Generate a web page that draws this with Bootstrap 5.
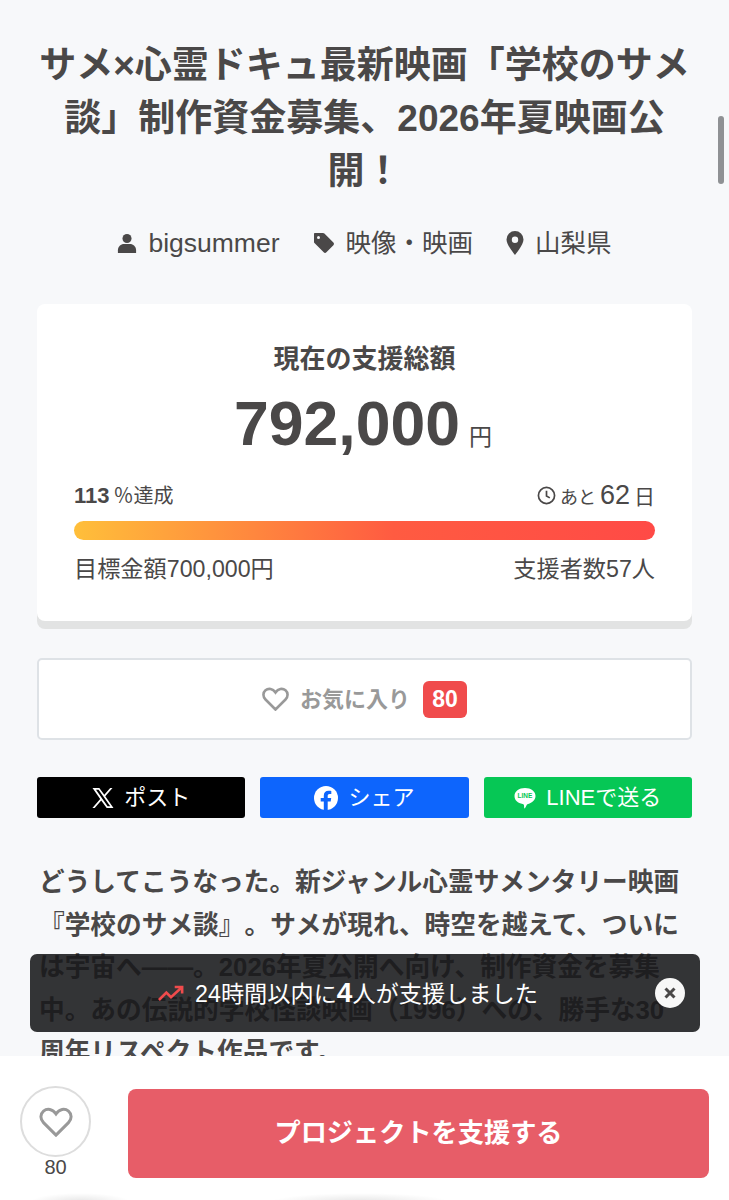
<!DOCTYPE html>
<html lang="ja">
<head>
  <meta charset="UTF-8">
  <meta name="viewport" content="width=device-width, initial-scale=1.0">
  <title>学校のサメ談</title>
  <link href="https://cdn.jsdelivr.net/npm/bootstrap@5.3.0/dist/css/bootstrap.min.css" rel="stylesheet">
  <style>
    html, body { height: 1200px; overflow: hidden; }
    body {
      background-color: #f7f8fa;
      color: #4a4848;
      font-family: "Liberation Sans", "Noto Sans CJK JP", sans-serif;
      text-spacing-trim: space-all;
    }
    .page-wrap { padding: 39px 37px 0; height: 1056px; overflow: hidden; }
    .pj-title {
      font-size: 37px;
      line-height: 53px;
      font-weight: 700;
      text-align: center;
      margin: 0;
      color: #4a4848;
    }
    .pj-meta { margin-top: 27px; font-size: 25.5px; line-height: 36px; gap: 33px; }
    .pj-meta > div { gap: 11px; }
    .pj-meta svg { fill: #4a4848; }
    .pj-user { font-size: 26.5px; }
    .total-card {
      margin-top: 43px;
      height: 317px;
      background: #fff;
      border-radius: 8px;
      box-shadow: 0 8px 0 #e2e3e3;
      padding: 37px 37px 0;
    }
    .total-label { font-size: 26px; line-height: 36px; font-weight: 700; }
    .total-num { font-size: 62.5px; line-height: 72px; font-weight: 700; margin: 10px 3px 0 0; }
    .total-num span { font-size: 23px; font-weight: 400; margin-left: 9px; line-height: 1; }
    .rate-row { margin-top: 18px; height: 36px; font-size: 20px; }
    .rate-row b { font-size: 22px; margin-right: 4px; }
    .days-pre { font-size: 18px; }
    .days-num { font-size: 27px; margin: 0 4px; }
    .days-unit { font-size: 21px; }
    .bar-track { height: 19px; border-radius: 10px; margin-top: 8px; background: linear-gradient(90deg, #ffbf3a 0%, #ff5b41 55%, #ff4a46 100%); }
    .goal-row { margin-top: 13px; font-size: 23.2px; line-height: 32px; }
    .fav-box {
      margin-top: 37px;
      height: 82px;
      background: #fff;
      border: 2px solid #dee2e6;
      border-radius: 5px;
      font-size: 22px;
      font-weight: 700;
      color: #999;
      gap: 11px;
    }
    .fav-count {
      background: #f04b4c;
      color: #fff;
      font-size: 23px;
      border-radius: 6px;
      width: 44px;
      height: 37px;
      margin-left: 2px;
    }
    .share-row { margin-top: 37px; gap: 15px; }
    .share-btn {
      height: 41px;
      flex: 1 1 0;
      border-radius: 3px;
      color: #fff;
      font-size: 22px;
      gap: 10px;
    }
    .share-x { background: #000; }
    .share-fb { background: #0d65fd; }
    .share-line { background: #06c755; }
    .line-word { font-size: 6.500px; font-weight: 700; fill: #06c755; }
    .pj-lead { margin: 43px 0 0 2px; font-size: 25.7px; line-height: 42.5px; font-weight: 700; }
    .toast-bar {
      position: absolute;
      left: 30px;
      top: 954px;
      width: 670px;
      height: 78px;
      background: rgba(24, 24, 26, .88);
      border-radius: 7px;
      color: #fff;
      font-size: 23.2px;
      padding-right: 34px;
      gap: 11px;
    }
    .toast-bar b { font-size: 28px; }
    .toast-close {
      position: absolute;
      right: 15px;
      top: 24px;
      width: 30px;
      height: 30px;
      border-radius: 50%;
      background: #f7f7f7;
    }
    .bottom-bar {
      position: absolute;
      left: 0;
      top: 1056px;
      width: 729px;
      height: 144px;
      background:
        radial-gradient(ellipse 50px 9px at 80px 146px, rgba(0,0,0,.1), transparent),
        radial-gradient(ellipse 90px 9px at 360px 146px, rgba(0,0,0,.1), transparent),
        #fff;
    }
    .like-col { position: absolute; left: 20px; top: 30px; width: 71px; text-align: center; }
    .like-circle { width: 71px; height: 71px; border: 2px solid #ddd; border-radius: 50%; }
    .like-num { font-size: 20px; line-height: 24px; margin-top: -2px; }
    .support-btn {
      position: absolute;
      left: 128px;
      top: 33px;
      width: 581px;
      height: 89px;
      background: #e75d68;
      border-radius: 8px;
      color: #fff;
      font-size: 26.2px;
      font-weight: 700;
    }
    .scroll-thumb { position: absolute; left: 718px; top: 116px; width: 6px; height: 68px; border-radius: 3px; background: #8f9194; }
  </style>
</head>
<body>
  <div class="page-wrap">
    <h1 class="pj-title">サメ×心霊ドキュ最新映画「学校のサメ談」制作資金募集、2026年夏映画公開！</h1>

    <div class="pj-meta d-flex justify-content-center align-items-center">
      <div class="d-flex align-items-center">
        <svg width="20" height="22" viewBox="0 0 22 22"><circle cx="11" cy="6" r="5"/><path d="M1 22v-3c0-4 3-7 7-7h6c4 0 7 3 7 7v3z"/></svg>
        <span class="pj-user">bigsummer</span>
      </div>
      <div class="d-flex align-items-center">
        <svg width="22" height="22" viewBox="0 0 22 22"><path fill-rule="evenodd" d="M2 1h8c.6 0 1 .2 1.400.6l9 9c.8.8.8 1.900 0 2.700l-7 7c-.8.8-1.900.8-2.700 0l-9-9C1.200 11 1 10.600 1 10V2c0-.6.4-1 1-1zm3.500 3a1.500 1.500 0 1 0 0 3 1.500 1.500 0 0 0 0-3z"/></svg>
        <span>映像・映画</span>
      </div>
      <div class="d-flex align-items-center">
        <svg width="18" height="24" viewBox="0 0 18 24"><path fill-rule="evenodd" d="M9 0a8.500 8.500 0 0 0-8.500 8.500C.5 14 9 24 9 24s8.500-10 8.500-15.500A8.500 8.500 0 0 0 9 0zm0 5.500a3.200 3.200 0 1 1 0 6.400 3.200 3.200 0 0 1 0-6.400z"/></svg>
        <span>山梨県</span>
      </div>
    </div>

    <div class="total-card">
      <div class="total-label text-center">現在の支援総額</div>
      <div class="total-num text-center">792,000<span>円</span></div>
      <div class="rate-row d-flex justify-content-between align-items-center">
        <div><b>113</b>％達成</div>
        <div class="d-flex align-items-center gap-1">
          <svg width="19" height="19" viewBox="0 0 20 20" fill="none" stroke="#4a4848" stroke-width="1.800"><circle cx="10" cy="10" r="8.500"/><path d="M10 5v5.500l3.500 2"/></svg>
          <span><span class="days-pre">あと</span><span class="days-num">62</span><span class="days-unit">日</span></span>
        </div>
      </div>
      <div class="bar-track"></div>
      <div class="goal-row d-flex justify-content-between">
        <div>目標金額700,000円</div>
        <div>支援者数57人</div>
      </div>
    </div>

    <div class="fav-box d-flex justify-content-center align-items-center">
      <svg width="27" height="24" viewBox="0 0 27 24" fill="none" stroke="#999" stroke-width="2.600"><path d="M13.500 22.500 3.500 12.500C.5 9.500 1 5.500 3.500 3.300 6.500.8 10.800 1.500 13.500 5.500 16.200 1.500 20.500.8 23.500 3.300c2.500 2.200 3 6.200 0 9.200z"/></svg>
      <span>お気に入り</span>
      <span class="fav-count d-flex justify-content-center align-items-center">80</span>
    </div>

    <div class="share-row d-flex">
      <div class="share-btn share-x d-flex justify-content-center align-items-center">
        <svg width="22" height="20" viewBox="0 0 22 20" fill="#fff"><path fill-rule="evenodd" d="M.5 0h6.800l5 6.800L18.200 0h2.300l-7.200 8.300L21.500 20h-6.800l-5.500-7.500L2.700 20H.4l7.800-9zm3.500 1.800 11.600 16.400h2.600L6.600 1.800z"/></svg>
        <span>ポスト</span>
      </div>
      <div class="share-btn share-fb d-flex justify-content-center align-items-center">
        <svg width="24" height="24" viewBox="0 0 24 24"><circle cx="12" cy="12" r="12" fill="#fff"/><path fill="#0d65fd" d="M16.700 15.500l.5-3.500h-3.500V9.800c0-1 .5-1.900 2-1.900h1.600v-3s-1.400-.2-2.800-.2c-2.800 0-4.700 1.700-4.700 4.800V12H6.700v3.500h3.100V24h3.900v-8.500z"/></svg>
        <span>シェア</span>
      </div>
      <div class="share-btn share-line d-flex justify-content-center align-items-center">
        <svg width="22" height="22" viewBox="0 0 22 22"><path fill="#fff" d="M11 1C5 1 .5 4.500.5 9c0 4.200 3.300 7.300 8.200 7.900.8.100 1.200.6 1.300 1.300l.2 2.800c.1.500.5.500.9.100l1.900-3.600c.3-.4.600-.5 1.100-.6 4-1 7.400-3.900 7.400-7.900C21.500 4.500 17 1 11 1z"/><text class="line-word" x="11" y="11.400" text-anchor="middle">LINE</text></svg>
        <span>LINEで送る</span>
      </div>
    </div>

    <p class="pj-lead">どうしてこうなった。新ジャンル心霊サメンタリー映画『学校のサメ談』。サメが現れ、時空を越えて、ついには宇宙へ――。2026年夏公開へ向け、制作資金を募集中。あの伝説的学校怪談映画（1996）への、勝手な30<br>周年リスペクト作品です。</p>
  </div>

  <div class="scroll-thumb"></div>

  <div class="toast-bar d-flex justify-content-center align-items-center">
    <svg width="26" height="17" viewBox="0 0 28 18" fill="none" stroke="#f04b4c" stroke-width="2.800"><path d="M1 16 9 8l5 5L26 2M18 2h8v7"/></svg>
    <span>24時間以内に<b>4</b>人が支援しました</span>
    <div class="toast-close d-flex justify-content-center align-items-center">
      <svg width="12" height="12" viewBox="0 0 12 12" stroke="#4a4848" stroke-width="3"><path d="M1.500 1.500l9 9M10.500 1.500l-9 9"/></svg>
    </div>
  </div>

  <div class="bottom-bar">
    <div class="like-col">
      <div class="like-circle d-flex justify-content-center align-items-center">
        <svg width="34" height="30" viewBox="0 0 27 24" fill="none" stroke="#999" stroke-width="2.400"><path d="M13.500 22.500 3.500 12.500C.5 9.500 1 5.500 3.500 3.300 6.500.8 10.800 1.500 13.500 5.500 16.200 1.500 20.500.8 23.500 3.300c2.500 2.200 3 6.200 0 9.200z"/></svg>
      </div>
      <div class="like-num">80</div>
    </div>
    <div class="support-btn d-flex justify-content-center align-items-center">プロジェクトを支援する</div>
  </div>

  <script src="https://cdn.jsdelivr.net/npm/bootstrap@5.3.0/dist/js/bootstrap.bundle.min.js"></script>
</body>
</html>
